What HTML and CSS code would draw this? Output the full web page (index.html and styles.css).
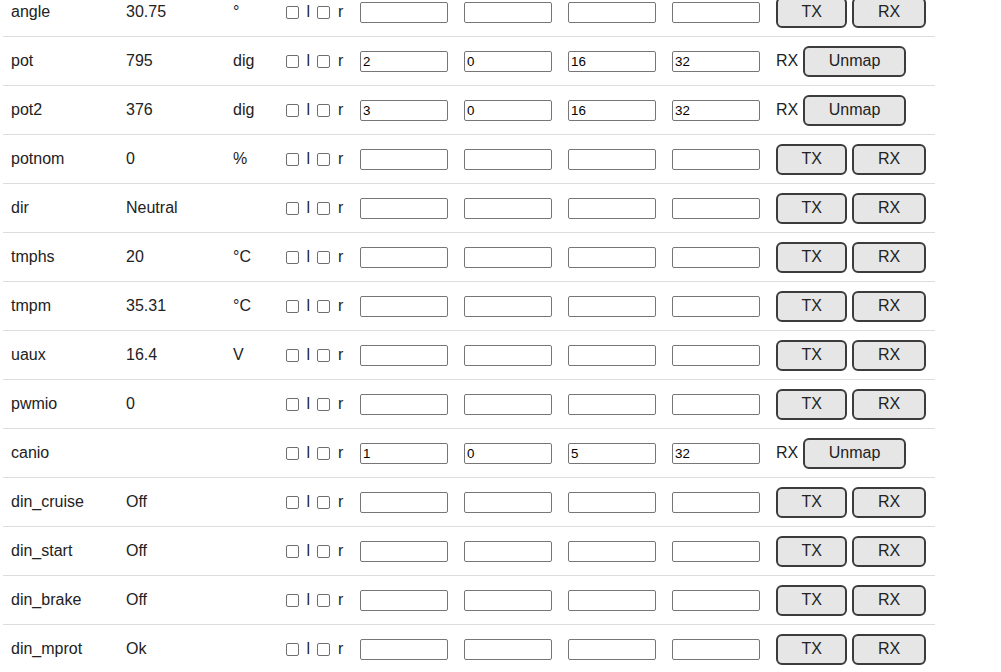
FILE: index.html
```html
<!DOCTYPE html>
<html>
<head>
<meta charset="utf-8">
<link rel="stylesheet" href="styles.css">
</head>
<body>
<div class="table">
  <div class="row"><div class="cell">angle</div><div class="cell">30.75</div><div class="cell">°</div><div class="cell chk"><input type="checkbox"> l <input type="checkbox"> r</div><div class="cell"><input class="field" type="text"></div><div class="cell"><input class="field" type="text"></div><div class="cell"><input class="field" type="text"></div><div class="cell"><input class="field" type="text"></div><div class="cell act"><button>TX</button><button>RX</button></div></div>
  <div class="row"><div class="cell">pot</div><div class="cell">795</div><div class="cell">dig</div><div class="cell chk"><input type="checkbox"> l <input type="checkbox"> r</div><div class="cell"><input class="field" type="text" value="2"></div><div class="cell"><input class="field" type="text" value="0"></div><div class="cell"><input class="field" type="text" value="16"></div><div class="cell"><input class="field" type="text" value="32"></div><div class="cell act"><span>RX</span><button>Unmap</button></div></div>
  <div class="row"><div class="cell">pot2</div><div class="cell">376</div><div class="cell">dig</div><div class="cell chk"><input type="checkbox"> l <input type="checkbox"> r</div><div class="cell"><input class="field" type="text" value="3"></div><div class="cell"><input class="field" type="text" value="0"></div><div class="cell"><input class="field" type="text" value="16"></div><div class="cell"><input class="field" type="text" value="32"></div><div class="cell act"><span>RX</span><button>Unmap</button></div></div>
  <div class="row"><div class="cell">potnom</div><div class="cell">0</div><div class="cell">%</div><div class="cell chk"><input type="checkbox"> l <input type="checkbox"> r</div><div class="cell"><input class="field" type="text"></div><div class="cell"><input class="field" type="text"></div><div class="cell"><input class="field" type="text"></div><div class="cell"><input class="field" type="text"></div><div class="cell act"><button>TX</button><button>RX</button></div></div>
  <div class="row"><div class="cell">dir</div><div class="cell">Neutral</div><div class="cell"></div><div class="cell chk"><input type="checkbox"> l <input type="checkbox"> r</div><div class="cell"><input class="field" type="text"></div><div class="cell"><input class="field" type="text"></div><div class="cell"><input class="field" type="text"></div><div class="cell"><input class="field" type="text"></div><div class="cell act"><button>TX</button><button>RX</button></div></div>
  <div class="row"><div class="cell">tmphs</div><div class="cell">20</div><div class="cell">°C</div><div class="cell chk"><input type="checkbox"> l <input type="checkbox"> r</div><div class="cell"><input class="field" type="text"></div><div class="cell"><input class="field" type="text"></div><div class="cell"><input class="field" type="text"></div><div class="cell"><input class="field" type="text"></div><div class="cell act"><button>TX</button><button>RX</button></div></div>
  <div class="row"><div class="cell">tmpm</div><div class="cell">35.31</div><div class="cell">°C</div><div class="cell chk"><input type="checkbox"> l <input type="checkbox"> r</div><div class="cell"><input class="field" type="text"></div><div class="cell"><input class="field" type="text"></div><div class="cell"><input class="field" type="text"></div><div class="cell"><input class="field" type="text"></div><div class="cell act"><button>TX</button><button>RX</button></div></div>
  <div class="row"><div class="cell">uaux</div><div class="cell">16.4</div><div class="cell">V</div><div class="cell chk"><input type="checkbox"> l <input type="checkbox"> r</div><div class="cell"><input class="field" type="text"></div><div class="cell"><input class="field" type="text"></div><div class="cell"><input class="field" type="text"></div><div class="cell"><input class="field" type="text"></div><div class="cell act"><button>TX</button><button>RX</button></div></div>
  <div class="row"><div class="cell">pwmio</div><div class="cell">0</div><div class="cell"></div><div class="cell chk"><input type="checkbox"> l <input type="checkbox"> r</div><div class="cell"><input class="field" type="text"></div><div class="cell"><input class="field" type="text"></div><div class="cell"><input class="field" type="text"></div><div class="cell"><input class="field" type="text"></div><div class="cell act"><button>TX</button><button>RX</button></div></div>
  <div class="row"><div class="cell">canio</div><div class="cell"></div><div class="cell"></div><div class="cell chk"><input type="checkbox"> l <input type="checkbox"> r</div><div class="cell"><input class="field" type="text" value="1"></div><div class="cell"><input class="field" type="text" value="0"></div><div class="cell"><input class="field" type="text" value="5"></div><div class="cell"><input class="field" type="text" value="32"></div><div class="cell act"><span>RX</span><button>Unmap</button></div></div>
  <div class="row"><div class="cell">din_cruise</div><div class="cell">Off</div><div class="cell"></div><div class="cell chk"><input type="checkbox"> l <input type="checkbox"> r</div><div class="cell"><input class="field" type="text"></div><div class="cell"><input class="field" type="text"></div><div class="cell"><input class="field" type="text"></div><div class="cell"><input class="field" type="text"></div><div class="cell act"><button>TX</button><button>RX</button></div></div>
  <div class="row"><div class="cell">din_start</div><div class="cell">Off</div><div class="cell"></div><div class="cell chk"><input type="checkbox"> l <input type="checkbox"> r</div><div class="cell"><input class="field" type="text"></div><div class="cell"><input class="field" type="text"></div><div class="cell"><input class="field" type="text"></div><div class="cell"><input class="field" type="text"></div><div class="cell act"><button>TX</button><button>RX</button></div></div>
  <div class="row"><div class="cell">din_brake</div><div class="cell">Off</div><div class="cell"></div><div class="cell chk"><input type="checkbox"> l <input type="checkbox"> r</div><div class="cell"><input class="field" type="text"></div><div class="cell"><input class="field" type="text"></div><div class="cell"><input class="field" type="text"></div><div class="cell"><input class="field" type="text"></div><div class="cell act"><button>TX</button><button>RX</button></div></div>
  <div class="row"><div class="cell">din_mprot</div><div class="cell">Ok</div><div class="cell"></div><div class="cell chk"><input type="checkbox"> l <input type="checkbox"> r</div><div class="cell"><input class="field" type="text"></div><div class="cell"><input class="field" type="text"></div><div class="cell"><input class="field" type="text"></div><div class="cell"><input class="field" type="text"></div><div class="cell act"><button>TX</button><button>RX</button></div></div>
</div>
</body>
</html>
```
FILE: styles.css
```css
html, body {
  margin: 0;
  padding: 0;
  background: #fff;
  overflow: hidden;
}
body {
  font-family: "Liberation Sans", Arial, sans-serif;
  font-size: 16px;
  color: #222;
}
.table {
  margin: -12px 0 0 3px;
  width: 932px;
}
.row {
  display: grid;
  grid-template-columns: 115px 107px 53px 74px 104px 104px 104px 104px 167px;
  height: 48px;
  border-bottom: 1px solid #dddddd;
  align-items: center;
}
.cell {
  padding-left: 8px;
  display: flex;
  align-items: center;
  white-space: nowrap;
  line-height: 18px;
}
.chk {
  padding-left: 5px;
  white-space: pre;
}
.chk input {
  appearance: none;
  -webkit-appearance: none;
  box-sizing: border-box;
  width: 13px;
  height: 13px;
  margin: 0 3px;
  border: 1px solid #6f6f6f;
  border-radius: 2px;
  background: #fff;
}
.field {
  box-sizing: border-box;
  width: 88px;
  height: 21px;
  margin: 0;
  padding: 1px 2px;
  border: 1px solid #767676;
  border-radius: 2px;
  font-family: "Liberation Sans", Arial, sans-serif;
  font-size: 13.333px;
  color: #000;
  background: #fff;
}
.act {
  gap: 5px;
}
.act span {
  color: #222;
}
button {
  box-sizing: border-box;
  height: 31px;
  margin: 0;
  padding: 0 23.5px;
  border: 2px solid #3c3c3c;
  border-radius: 6px;
  background: #e6e6e6;
  font-family: "Liberation Sans", Arial, sans-serif;
  font-size: 16px;
  color: #222;
}
```
